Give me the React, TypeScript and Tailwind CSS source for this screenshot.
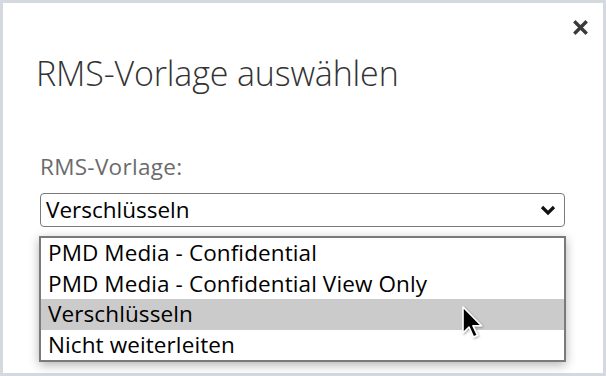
import React from "react";

export default function App() {
  const items = [
    "PMD Media - Confidential",
    "PMD Media - Confidential View Only",
    "Verschlüsseln",
    "Nicht weiterleiten",
  ];
  return (
    <div className="w-[606px] h-[376px] bg-[#d3d9de] p-[3px] overflow-hidden">
      <div className="relative w-full h-full bg-white flex flex-col" style={{ fontFamily: '"Open Sans", "Noto Sans", sans-serif' }}>
        <div className="flex justify-end pt-[17px] pr-[15px] h-[40px]">
          <svg width="15" height="15" viewBox="0 0 15 15">
            <path d="M2.5 2.5 L12.5 12.5 M12.5 2.5 L2.5 12.5" stroke="#3a3a3a" strokeWidth="3.4" strokeLinecap="square" />
          </svg>
        </div>
        <div className="pl-[33px] pt-[8px] text-[34px] font-light text-[#333] leading-[44px] tracking-[-0.15px]">
          RMS-Vorlage auswählen
        </div>
        <div className="pl-[37px] pt-[58px] text-[22.5px] text-[#6b6b6b] leading-[28px] tracking-[0.3px]">RMS-Vorlage:</div>
        <div className="ml-[37px] mr-[38px] mt-[12px] h-[34px] border border-[#7a7a7a] rounded-[4px] flex items-center justify-between pl-[5px] pr-[8px]">
          <span className="text-[22.5px] text-black leading-[28px]">Verschlüsseln</span>
          <svg width="16" height="11" viewBox="0 0 16 11">
            <path d="M2 2 L8 8 L14 2" stroke="#111" strokeWidth="3.2" fill="none" />
          </svg>
        </div>
        <div className="ml-[36px] mr-[37px] mt-[9px] border-2 border-[#7a7a7a] shadow-[0_3px_10px_rgba(0,0,0,0.3)] bg-white flex flex-col">
          {items.map((t, i) => (
            <div
              key={t}
              className={`h-[30.5px] flex items-center pl-[7px] text-[22.5px] text-black leading-[28px] tracking-[0.1px] ${i === 2 ? "bg-[#cbcbcb]" : ""}`}
            >
              {t}
            </div>
          ))}
        </div>
        <svg className="absolute left-[457px] top-[302px]" width="28" height="40" viewBox="0 0 28 40">
          <defs>
            <filter id="sh" x="-30%" y="-30%" width="160%" height="160%">
              <feDropShadow dx="1" dy="1" stdDeviation="1" floodColor="#000" floodOpacity="0.35" />
            </filter>
          </defs>
          <path
            d="M3 2 L3 28 L9 22 L13.5 32 L17.5 30.3 L13 20.8 L21.5 20.8 Z"
            fill="#000"
            stroke="#fff"
            strokeWidth="1.6"
            strokeLinejoin="round"
            filter="url(#sh)"
          />
        </svg>
      </div>
    </div>
  );
}
